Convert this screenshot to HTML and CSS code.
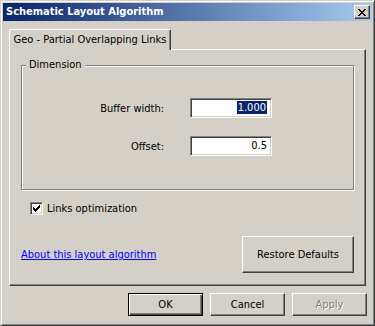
FILE: index.html
```html
<!DOCTYPE html>
<html>
<head>
<meta charset="utf-8">
<link rel="stylesheet" href="styles.css">
</head>
<body>
<div class="window">
  <div class="titlebar">
    <span class="title">Schematic Layout Algorithm</span>
    <span class="close-btn">
      <svg width="8" height="7" viewBox="0 0 8 7" shape-rendering="crispEdges">
        <path d="M0 0h2v1h-2zM6 0h2v1h-2zM1 1h2v1h-2zM5 1h2v1h-2zM2 2h4v1h-4zM3 3h2v1h-2zM2 4h4v1h-4zM1 5h2v1h-2zM5 5h2v1h-2zM0 6h2v1h-2zM6 6h2v1h-2z" fill="#000"/>
      </svg>
    </span>
  </div>
  <div class="client">
    <div class="tabs">
      <div class="tab">Geo - Partial Overlapping Links</div>
    </div>
    <div class="panel">
      <div class="group">
        <span class="legend">Dimension</span>
        <div class="fields">
          <span class="label">Buffer width:</span>
          <div class="edit"><span class="sel">1.000</span></div>
          <span class="label">Offset:</span>
          <div class="edit">0.5</div>
        </div>
      </div>
      <div class="check-row">
        <span class="checkbox">
          <svg width="7" height="7" viewBox="0 0 7 7" shape-rendering="crispEdges">
            <path d="M6 0h1v1h-1zM5 1h2v1h-2zM0 2h1v1h-1zM4 2h3v1h-3zM0 3h2v1h-2zM3 3h3v1h-3zM0 4h5v1h-5zM1 5h3v1h-3zM2 6h1v1h-1z" fill="#000"/>
          </svg>
        </span>
        <span class="check-label">Links optimization</span>
      </div>
      <div class="bottom-row">
        <a class="link" href="#">About this layout algorithm</a>
        <span class="btn restore">Restore Defaults</span>
      </div>
    </div>
    <div class="buttons">
      <span class="btn default">OK</span>
      <span class="btn">Cancel</span>
      <span class="btn disabled">Apply</span>
    </div>
  </div>
</div>
</body>
</html>
```
FILE: styles.css
```css
html, body {
  margin: 0;
  padding: 0;
  background: #d4d0c8;
}
body {
  font-family: "DejaVu Sans Condensed", "Liberation Sans", sans-serif;
  font-size: 11px;
  color: #000;
}
.window {
  width: 375px;
  height: 326px;
  box-sizing: border-box;
  background: #d4d0c8;
  border: 1px solid;
  border-color: #d4d0c8 #404040 #404040 #d4d0c8;
  box-shadow: inset 1px 1px 0 #fff, inset -1px -1px 0 #808080;
  padding: 2px;
}
.titlebar {
  height: 18px;
  display: flex;
  align-items: center;
  background: linear-gradient(to right, #0a246a, #a6caf0);
}
.title {
  color: #fff;
  font-weight: bold;
  padding-left: 3px;
  line-height: 18px;
}
.close-btn {
  margin-left: auto;
  margin-right: 2px;
  width: 16px;
  height: 14px;
  box-sizing: border-box;
  background: #d4d0c8;
  border: 1px solid;
  border-color: #fff #404040 #404040 #fff;
  box-shadow: inset -1px -1px 0 #808080;
  display: flex;
  align-items: center;
  justify-content: center;
  padding-right: 1px;
}
.close-btn svg { display: block; }
.client {
  padding: 0 5px 0 6px;
}
.tabs {
  margin-top: 8px;
  display: flex;
  position: relative;
  z-index: 2;
}
.tab {
  width: 162px;
  height: 21px;
  box-sizing: border-box;
  margin-bottom: -1px;
  background: #d4d0c8;
  border-top: 1px solid #fff;
  border-left: 1px solid #fff;
  border-right: 1px solid #404040;
  border-radius: 2px 2px 0 0;
  box-shadow: inset -1px 0 0 #808080;
  text-align: center;
  line-height: 19px;
}
.panel {
  width: 357px;
  height: 237px;
  box-sizing: border-box;
  border: 1px solid;
  border-color: #fff #404040 #404040 #fff;
  box-shadow: inset -1px -1px 0 #808080;
  padding: 0 11px;
  position: relative;
  z-index: 1;
}
.group {
  margin-top: 15px;
  height: 125px;
  box-sizing: border-box;
  border: 1px solid #808080;
  box-shadow: inset 1px 1px 0 #fff, 1px 1px 0 #fff;
  position: relative;
}
.legend {
  position: absolute;
  left: 4px;
  top: -8px;
  padding: 0 3px;
  background: #d4d0c8;
  line-height: 14px;
}
.fields {
  display: grid;
  grid-template-columns: 142px 82px;
  column-gap: 26px;
  row-gap: 18px;
  padding-top: 32px;
  align-items: center;
}
.label {
  text-align: right;
}
.edit {
  height: 20px;
  box-sizing: border-box;
  background: #fff;
  border: 1px solid;
  border-color: #808080 #fff #fff #808080;
  box-shadow: inset 1px 1px 0 #404040, inset -1px -1px 0 #d4d0c8;
  text-align: right;
  padding-right: 4px;
  line-height: 18px;
}
.sel {
  background: #0a246a;
  color: #fff;
  padding: 0 1px;
}
.check-row {
  margin-top: 12px;
  margin-left: 9px;
  display: flex;
  align-items: center;
  height: 13px;
}
.checkbox {
  width: 13px;
  height: 13px;
  box-sizing: border-box;
  background: #fff;
  border: 1px solid;
  border-color: #808080 #fff #fff #808080;
  box-shadow: inset 1px 1px 0 #404040, inset -1px -1px 0 #d4d0c8;
  padding: 2px 0 0 2px;
}
.checkbox svg { display: block; }
.check-label {
  margin-left: 4px;
}
.bottom-row {
  margin-top: 21px;
  display: flex;
  align-items: center;
  justify-content: space-between;
}
.link {
  color: #0000ff;
  text-decoration: underline;
}
.btn {
  width: 75px;
  height: 23px;
  box-sizing: border-box;
  display: flex;
  align-items: center;
  justify-content: center;
  background: #d4d0c8;
  border: 1px solid;
  border-color: #fff #404040 #404040 #fff;
  box-shadow: inset -1px -1px 0 #808080;
}
.restore {
  width: 112px;
  height: 37px;
}
.buttons {
  margin-top: 7px;
  display: flex;
  justify-content: flex-end;
  gap: 7px;
}
.default {
  border: 1px solid #000;
  box-shadow: inset 1px 1px 0 #fff, inset -1px -1px 0 #404040, inset -2px -2px 0 #808080;
}
.disabled {
  color: #808080;
  text-shadow: 1px 1px 0 #fff;
}
```
